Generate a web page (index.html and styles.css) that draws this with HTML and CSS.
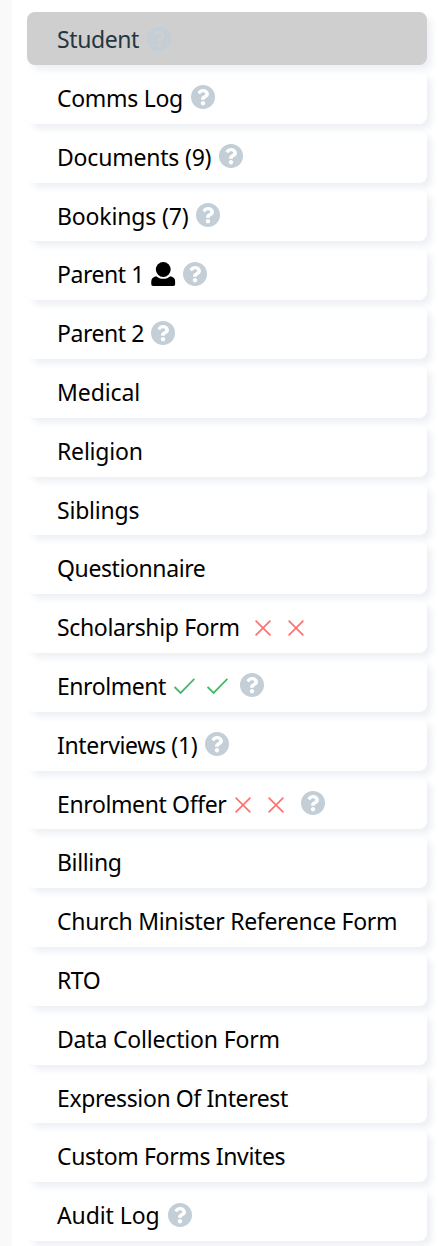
FILE: index.html
```html
<!DOCTYPE html>
<html lang="en">
<head>
<meta charset="utf-8">
<title>Student</title>
<link rel="stylesheet" href="styles.css">
</head>
<body>
<svg class="defs" aria-hidden="true">
  <symbol id="help" viewBox="8 8 496 496"><path d="M504 256c0 136.997-111.043 248-248 248S8 392.997 8 256C8 119.083 119.043 8 256 8s248 111.083 248 248z" fill="#c3ced6"/><path d="M262.655 90c-54.497 0-89.255 22.957-116.549 63.758-3.536 5.286-2.353 12.415 2.715 16.258l34.699 26.31c5.205 3.947 12.621 3.008 16.665-2.122 17.864-22.658 30.113-35.797 57.303-35.797 20.429 0 45.698 13.148 45.698 32.958 0 14.976-12.363 22.667-32.534 33.976C247.128 238.528 216 254.941 216 296v4c0 6.627 5.373 12 12 12h56c6.627 0 12-5.373 12-12v-1.333c0-28.462 83.186-29.647 83.186-106.667 0-58.002-60.165-102-116.531-102zM256 338c-25.365 0-46 20.635-46 46 0 25.364 20.635 46 46 46s46-20.636 46-46c0-25.364-20.635-46-46-46z" fill="currentColor"/></symbol>
  <symbol id="user" viewBox="0 0 24 24"><ellipse cx="12" cy="7.5" rx="7.4" ry="7.5"/><path d="M4.8 14.2C6.800 15.900 9.300 16.800 12 16.800s5.200-.9 7.200-2.600C22 14.700 24 16.600 24 19.500V22c0 1.200-.8 2-2 2H2c-1.200 0-2-.8-2-2v-2.500c0-2.900 2-4.800 4.800-5.300z"/></symbol>
  <symbol id="cross" viewBox="0 0 16 16"><path d="M.6.6l14.800 14.800M15.400.6L.6 15.400" fill="none" stroke="#ff6f6c" stroke-width="1.600"/></symbol>
  <symbol id="check" viewBox="0 0 21 16"><path d="M.6 9l6 6L20.400.8" fill="none" stroke="#47b869" stroke-width="1.800"/></symbol>
</svg>
<nav class="tabs">
  <a class="tab active"><span class="label w-student">Student</span><svg class="icon help"><use href="#help"/></svg></a>
  <a class="tab"><span class="label w-comms">Comms Log</span><svg class="icon help"><use href="#help"/></svg></a>
  <a class="tab"><span class="label w-documents">Documents (9)</span><svg class="icon help"><use href="#help"/></svg></a>
  <a class="tab"><span class="label w-bookings">Bookings (7)</span><svg class="icon help"><use href="#help"/></svg></a>
  <a class="tab"><span class="label w-parent">Parent 1</span><svg class="icon user"><use href="#user"/></svg><svg class="icon help"><use href="#help"/></svg></a>
  <a class="tab"><span class="label w-parent">Parent 2</span><svg class="icon help"><use href="#help"/></svg></a>
  <a class="tab"><span class="label w-medical">Medical</span></a>
  <a class="tab"><span class="label w-religion">Religion</span></a>
  <a class="tab"><span class="label w-siblings">Siblings</span></a>
  <a class="tab"><span class="label w-questionnaire">Questionnaire</span></a>
  <a class="tab"><span class="label w-scholarship">Scholarship Form</span><svg class="icon cross"><use href="#cross"/></svg><svg class="icon cross"><use href="#cross"/></svg></a>
  <a class="tab"><span class="label w-enrolment">Enrolment</span><svg class="icon check"><use href="#check"/></svg><svg class="icon check"><use href="#check"/></svg><svg class="icon help"><use href="#help"/></svg></a>
  <a class="tab"><span class="label w-interviews">Interviews (1)</span><svg class="icon help"><use href="#help"/></svg></a>
  <a class="tab"><span class="label w-offer">Enrolment Offer</span><svg class="icon cross"><use href="#cross"/></svg><svg class="icon cross"><use href="#cross"/></svg><svg class="icon help"><use href="#help"/></svg></a>
  <a class="tab"><span class="label w-billing">Billing</span></a>
  <a class="tab"><span class="label w-church">Church Minister Reference Form</span></a>
  <a class="tab"><span class="label w-rto">RTO</span></a>
  <a class="tab"><span class="label w-data">Data Collection Form</span></a>
  <a class="tab"><span class="label w-interest">Expression Of Interest</span></a>
  <a class="tab"><span class="label w-custom">Custom Forms Invites</span></a>
  <a class="tab"><span class="label w-audit">Audit Log</span><svg class="icon help"><use href="#help"/></svg></a>
</nav>
</body>
</html>
```
FILE: styles.css
```css
* { box-sizing: border-box; }
html { overflow: hidden; }
body { margin: 0; height: 1246px; overflow: hidden; background: #fff; border-left: 12px solid #f9f9f9; font: 23px/32px "Noto Sans", sans-serif; color: #000; }
.defs { position: absolute; width: 0; height: 0; }
.tabs { display: flex; flex-direction: column; gap: 6px; padding: 12.2px 11px 0 15px; }
.tab { display: flex; flex: none; align-items: flex-start; height: 52.8px; padding: 11px 0 0 30px; border-radius: 8px; color: #fff; box-shadow: 5px 5px 7px #edf0f4; }
.active { background: #cfcfcf; color: #cfcfcf; }
.label { flex: none; white-space: nowrap; color: #000; letter-spacing: -.3px; }
.active .label { color: #263640; }
.icon { flex: none; display: block; }
.help { width: 24px; height: 24px; margin-top: 3.400px; }
.active .help { margin-top: 4px; }
.user { width: 24.500px; height: 24px; margin: 3.400px 7.500px 0 0; fill: #000; }
.cross { width: 16px; height: 16px; margin: 9px 17px 0 0; }
.check { width: 21px; height: 16px; margin: 8px 12px 0 0; }
.w-student { width: 90px; letter-spacing: -.4px; }
.w-comms { width: 134px; }
.w-documents { width: 162.300px; letter-spacing: -.2px; }
.w-bookings { width: 139px; letter-spacing: -.15px; }
.w-parent { width: 94.200px; letter-spacing: -.45px; }
.w-medical { letter-spacing: -.1px; }
.w-religion, .w-siblings { letter-spacing: -.2px; }
.w-questionnaire { letter-spacing: -.4px; }
.w-scholarship { width: 198px; letter-spacing: -.35px; }
.w-enrolment { width: 116.700px; letter-spacing: -.45px; }
.w-interviews { width: 148px; letter-spacing: -.33px; }
.w-offer { width: 177.800px; letter-spacing: -.38px; }
.w-billing { letter-spacing: -.35px; }
.w-rto { letter-spacing: -.5px; }
.w-data { letter-spacing: -.18px; }
.w-interest { letter-spacing: -.4px; }
.w-custom { letter-spacing: -.35px; }
.w-audit { width: 111px; letter-spacing: -.1px; }
```
